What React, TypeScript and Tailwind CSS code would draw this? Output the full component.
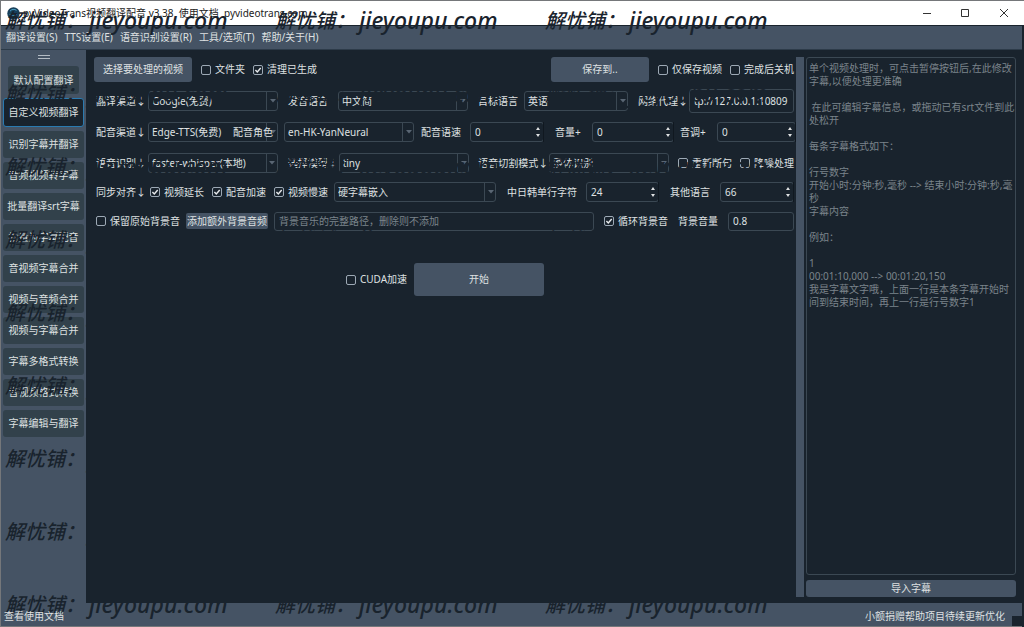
import React, { useState } from "react";

const FONT = "font-['Noto_Sans','Noto_Sans_CJK_SC',sans-serif]";

const NAV = [
  "默认配置翻译",
  "自定义视频翻译",
  "识别字幕并翻译",
  "音频视频转字幕",
  "批量翻译srt字幕",
  "批量为字幕配音",
  "音视频字幕合并",
  "视频与音频合并",
  "视频与字幕合并",
  "字幕多格式转换",
  "音视频格式转换",
  "字幕编辑与翻译",
];

const MENUS = ["翻译设置(S)", "TTS设置(E)", "语音识别设置(R)", "工具/选项(T)", "帮助/关于(H)"];

const HINT = `单个视频处理时，可点击暂停按钮后,在此修改字幕,以便处理更准确

 在此可编辑字幕信息，或拖动已有srt文件到此处松开

每条字幕格式如下：

行号数字
开始小时:分钟:秒,毫秒 --> 结束小时:分钟:秒,毫秒
字幕内容

例如：

1
00:01:10,000 --> 00:01:20,150
我是字幕文字哦，上面一行是本条字幕开始时间到结束时间，再上一行是行号数字1`;

const FIELD =
  "w-full min-w-0 rounded-[3px] border border-[#3b4853] bg-[#19232d] text-[#dfe1e2] outline-none";

function Label({ htmlFor, className, children }: { htmlFor: string; className: string; children: React.ReactNode }) {
  return (
    <label htmlFor={htmlFor} className={`shrink-0 whitespace-nowrap ${className}`}>
      {children}
    </label>
  );
}

function Select({ id, value, className }: { id: string; value: string; className: string }) {
  return (
    <span className={`grid min-w-0 grow ${className}`}>
      <select id={id} className={`${FIELD} col-start-1 row-start-1 h-5 appearance-none pl-[3px] text-[10px]`}>
        <option>{value}</option>
      </select>
      <span className="pointer-events-none col-start-1 row-start-1 flex h-5 w-3 items-center justify-center justify-self-end border-l border-[#3b4853]">
        <svg width="6" height="4" viewBox="0 0 6 4">
          <path d="M0 0h6L3 3.4z" fill="#5a6673" />
        </svg>
      </span>
    </span>
  );
}

function Spin({ id, value, className }: { id: string; value: number; className: string }) {
  return (
    <span className={`grid min-w-0 grow ${className}`}>
      <input
        id={id}
        type="number"
        defaultValue={value}
        className={`${FIELD} col-start-1 row-start-1 h-5 pl-1 text-[10px] [appearance:textfield] [&::-webkit-inner-spin-button]:appearance-none`}
      />
      <span className="pointer-events-none col-start-1 row-start-1 flex h-5 w-3 flex-col items-center justify-center gap-1 justify-self-end border-r border-[#101820]">
        <svg width="4" height="3" viewBox="0 0 4 3">
          <path d="M0 3h4L2 0z" fill="#dfe1e2" />
        </svg>
        <svg width="4" height="3" viewBox="0 0 4 3">
          <path d="M0 0h4L2 3z" fill="#dfe1e2" />
        </svg>
      </span>
    </span>
  );
}

function Check({ text, on = false, className = "" }: { text: string; on?: boolean; className?: string }) {
  return (
    <label className={`flex shrink-0 items-center gap-1 whitespace-nowrap ${className}`}>
      <span className="grid">
        <input
          type="checkbox"
          defaultChecked={on}
          className="peer col-start-1 row-start-1 size-[10px] appearance-none rounded-[2px] border border-[#9da9b5]"
        />
        <svg
          width="10"
          height="10"
          viewBox="0 0 10 10"
          className="pointer-events-none invisible col-start-1 row-start-1 peer-checked:visible"
        >
          <path d="M2.4 5l1.9 2L7.7 3" fill="none" stroke="#e8eaec" strokeWidth="1.4" />
        </svg>
      </span>
      {text}
    </label>
  );
}

function Watermark() {
  return (
    <div
      aria-hidden="true"
      className="pointer-events-none absolute inset-0 grid auto-rows-[73px] grid-cols-[270px_270px_270px] overflow-hidden pt-[3px] pl-1 text-[#19232d] italic"
    >
      {Array.from({ length: 27 }, (_, i) => (
        <span key={i} className="flex h-8 items-center whitespace-nowrap">
          <span className="w-[84px] text-[20px] font-medium">解忧铺：</span>
          <span className="text-[23px] font-medium">jieyoupu.com</span>
        </span>
      ))}
    </div>
  );
}

export default function App() {
  const [active, setActive] = useState(1);
  return (
    <div
      className={`${FONT} relative flex min-h-screen flex-col overflow-hidden border-t border-l border-[#75777a] bg-[#19232d] text-[10px] leading-[13px] text-[#dfe1e2]`}
    >
      <header className="flex h-6 items-center bg-white pl-1.5 text-[#222]">
        <svg width="13" height="13" viewBox="0 0 13 13">
          <circle cx="6.5" cy="6.5" r="6.2" fill="#173f5a" />
          <path d="M3 4.2a4.5 4.5 0 0 1 6.5-.8M2.6 7.4c2 1.8 5 2 7.4-.4" fill="none" stroke="#4fa3c7" />
        </svg>
        <h1 className="ml-[3px] grow whitespace-pre">pyVideoTrans视频翻译配音 v3.38  使用文档  pyvideotrans.com</h1>
        <div className="flex">
          <button aria-label="最小化" className="grid h-6 w-[38px] place-items-center">
            <svg width="8" height="8" viewBox="0 0 8 8"><path d="M0 4.5h8" stroke="#333" /></svg>
          </button>
          <button aria-label="最大化" className="grid h-6 w-[38px] place-items-center">
            <svg width="8" height="8" viewBox="0 0 8 8"><path d="M.5.5h7v7h-7z" fill="none" stroke="#333" /></svg>
          </button>
          <button aria-label="关闭" className="grid h-6 w-10 place-items-center">
            <svg width="8" height="8" viewBox="0 0 8 8"><path d="M0 0l8 8M8 0L0 8" stroke="#333" /></svg>
          </button>
        </div>
      </header>

      <nav className="mr-0.5 flex h-[25px] items-center gap-[7px] border-y border-t-[#19232d] border-b-[#2d3b49] bg-[#455364] pl-[5px]">
        {MENUS.map((m) => (
          <button key={m} className="whitespace-nowrap">{m}</button>
        ))}
      </nav>

      <div className="flex grow">
        <aside className="flex w-[85px] shrink-0 flex-col items-center bg-[#455364] px-0.5">
          <span className="mt-[5px] h-1 w-3 border-y border-[#b4bcc4]" />
          <div className="mt-[7px] flex w-full flex-col gap-1">
            {NAV.map((n, i) => (
              <button
                key={n}
                onClick={() => setActive(i)}
                className={`rounded-[3px] whitespace-nowrap ${i === 0 ? "mx-[5px]" : ""} ${
                  i === active
                    ? "h-[29px] border border-[#2a7ab0] bg-[#19232d]"
                    : i === 0
                      ? "h-7 bg-[#32414b]"
                      : "h-[27px] bg-[#32414b]"
                }`}
              >
                {n}
              </button>
            ))}
          </div>
        </aside>

        <main className="flex min-w-0 grow flex-col overflow-hidden pt-[7px] pl-2">
          <div className="flex h-[25px] items-center pr-0.5">
            <button className="h-[25px] w-[98px] rounded-[3px] bg-[#455364]">选择要处理的视频</button>
            <Check text="文件夹" className="ml-[9px]" />
            <Check text="清理已生成" on className="ml-2" />
            <span className="grow" />
            <button className="h-[25px] w-[98px] rounded-[3px] bg-[#455364]">保存到..</button>
            <Check text="仅保存视频" className="ml-[9px]" />
            <Check text="完成后关机" className="ml-2" />
          </div>

          <div className="mt-[7px] flex h-6 items-center pr-0.5 pl-0.5">
            <Label htmlFor="tr" className="w-[52px]">翻译渠道↓</Label>
            <Select id="tr" value="Google(免费)" className="basis-[130px]" />
            <Label htmlFor="src" className="ml-2.5 w-[50px]">发音语言</Label>
            <Select id="src" value="中文简" className="basis-[130px]" />
            <Label htmlFor="dst" className="ml-2.5 w-[46px]">目标语言</Label>
            <Select id="dst" value="英语" className="basis-[104px]" />
            <Label htmlFor="proxy" className="ml-2.5 w-[51px]">网络代理↓</Label>
            <span className="flex min-w-0 grow basis-[105px]">
              <input id="proxy" defaultValue="tp://127.0.0.1:10809" className={`${FIELD} h-6 px-1 text-[10px]`} />
            </span>
          </div>

          <div className="mt-[9px] flex h-5 items-center pl-0.5">
            <Label htmlFor="tts" className="w-[52px]">配音渠道↓</Label>
            <Select id="tts" value="Edge-TTS(免费)" className="basis-[130px]" />
            <Label htmlFor="role" className="pointer-events-none z-10 -ml-[45px] w-[51px]">配音角色</Label>
            <Select id="role" value="en-HK-YanNeural" className="basis-[130px]" />
            <Label htmlFor="rate" className="ml-[7px] w-[49px]">配音语速</Label>
            <Spin id="rate" value={0} className="basis-[74px]" />
            <Label htmlFor="vol" className="ml-[11px] w-[37px]">音量+</Label>
            <Spin id="vol" value={0} className="basis-[82px]" />
            <Label htmlFor="pitch" className="ml-1.5 w-[37px]">音调+</Label>
            <Spin id="pitch" value={0} className="basis-[79px]" />
          </div>

          <div className="mt-[11px] flex h-5 items-center pr-0.5 pl-0.5">
            <Label htmlFor="asr" className="w-[52px]">语音识别↓</Label>
            <Select id="asr" value="faster-whisper(本地)" className="basis-[130px]" />
            <Label htmlFor="model" className="ml-2.5 w-[51px]">选择模型↓</Label>
            <Select id="model" value="tiny" className="basis-[131px]" />
            <Label htmlFor="split" className="ml-[9px] w-[71px]">语音切割模式↓</Label>
            <Select id="split" value="整体识别" className="basis-[120px]" />
            <Check text="重新断句" className="ml-[9px]" />
            <Check text="降噪处理" className="ml-2" />
          </div>

          <div className="mt-[9px] flex h-5 items-center pr-0.5 pl-0.5">
            <Label htmlFor="sub" className="w-[54px]">同步对齐↓</Label>
            <Check text="视频延长" on />
            <Check text="配音加速" on className="ml-2" />
            <Check text="视频慢速" on className="ml-2" />
            <Select id="sub" value="硬字幕嵌入" className="ml-1.5 basis-[162px]" />
            <Label htmlFor="cjk" className="ml-[11px] w-[79px]">中日韩单行字符</Label>
            <Spin id="cjk" value={24} className="basis-[73px]" />
            <Label htmlFor="oth" className="ml-[11px] w-[50px]">其他语言</Label>
            <Spin id="oth" value={66} className="basis-[74px]" />
          </div>

          <div className="mt-[9px] flex h-5 items-center pr-0.5 pl-0.5">
            <Check text="保留原始背景音" />
            <button className="ml-1.5 h-4 w-[82px] shrink-0 rounded-[2px] bg-[#455364] whitespace-nowrap">添加额外背景音频</button>
            <span className="ml-1.5 flex min-w-0 grow basis-[321px]">
              <input
                aria-label="背景音乐"
                placeholder="背景音乐的完整路径，删除则不添加"
                className={`${FIELD} h-[19px] px-1 text-[10px] placeholder:text-[#7b838b]`}
              />
            </span>
            <Check text="循环背景音" on className="ml-2.5" />
            <Label htmlFor="bgv" className="ml-2.5 w-[50px]">背景音量</Label>
            <span className="flex w-[66px] shrink-0">
              <input id="bgv" defaultValue="0.8" className={`${FIELD} h-[19px] px-1 text-[10px]`} />
            </span>
          </div>

          <div className="mt-8 flex items-center justify-center gap-[7px]">
            <Check text="CUDA加速" />
            <button className="h-[33px] w-[130px] rounded-[3px] bg-[#455364]">开始</button>
          </div>
        </main>

        <div className="mt-[7px] mb-1.5 w-2 shrink-0 bg-[#455364]" />

        <section className="mt-[7px] mr-2 mb-1.5 ml-0.5 flex w-[210px] shrink-0 flex-col gap-[5px]">
          <textarea
            aria-label="字幕"
            placeholder={HINT}
            className="w-full grow resize-none rounded-[3px] border border-[#3b4853] bg-[#19232d] py-1 pr-0 pl-0.5 text-[10px] leading-[13px] outline-none placeholder:text-[#7b838b]"
          />
          <button className="h-[17px] rounded-[3px] bg-[#455364]">导入字幕</button>
        </section>
      </div>

      <footer className="mr-0.5 flex h-6 items-center justify-between border-b border-[#75777a] bg-[#455364] pl-[3px]">
        <a href="#docs" className="z-10 pt-[3px]">查看使用文档</a>
        <span className="flex h-full items-center gap-[7px]">
          <a href="#donate" className="pt-[3px]">小额捐赠帮助项目待续更新优化</a>
          <span className="size-2.5 self-end bg-[#19232d]" />
        </span>
      </footer>

      <Watermark />
    </div>
  );
}
